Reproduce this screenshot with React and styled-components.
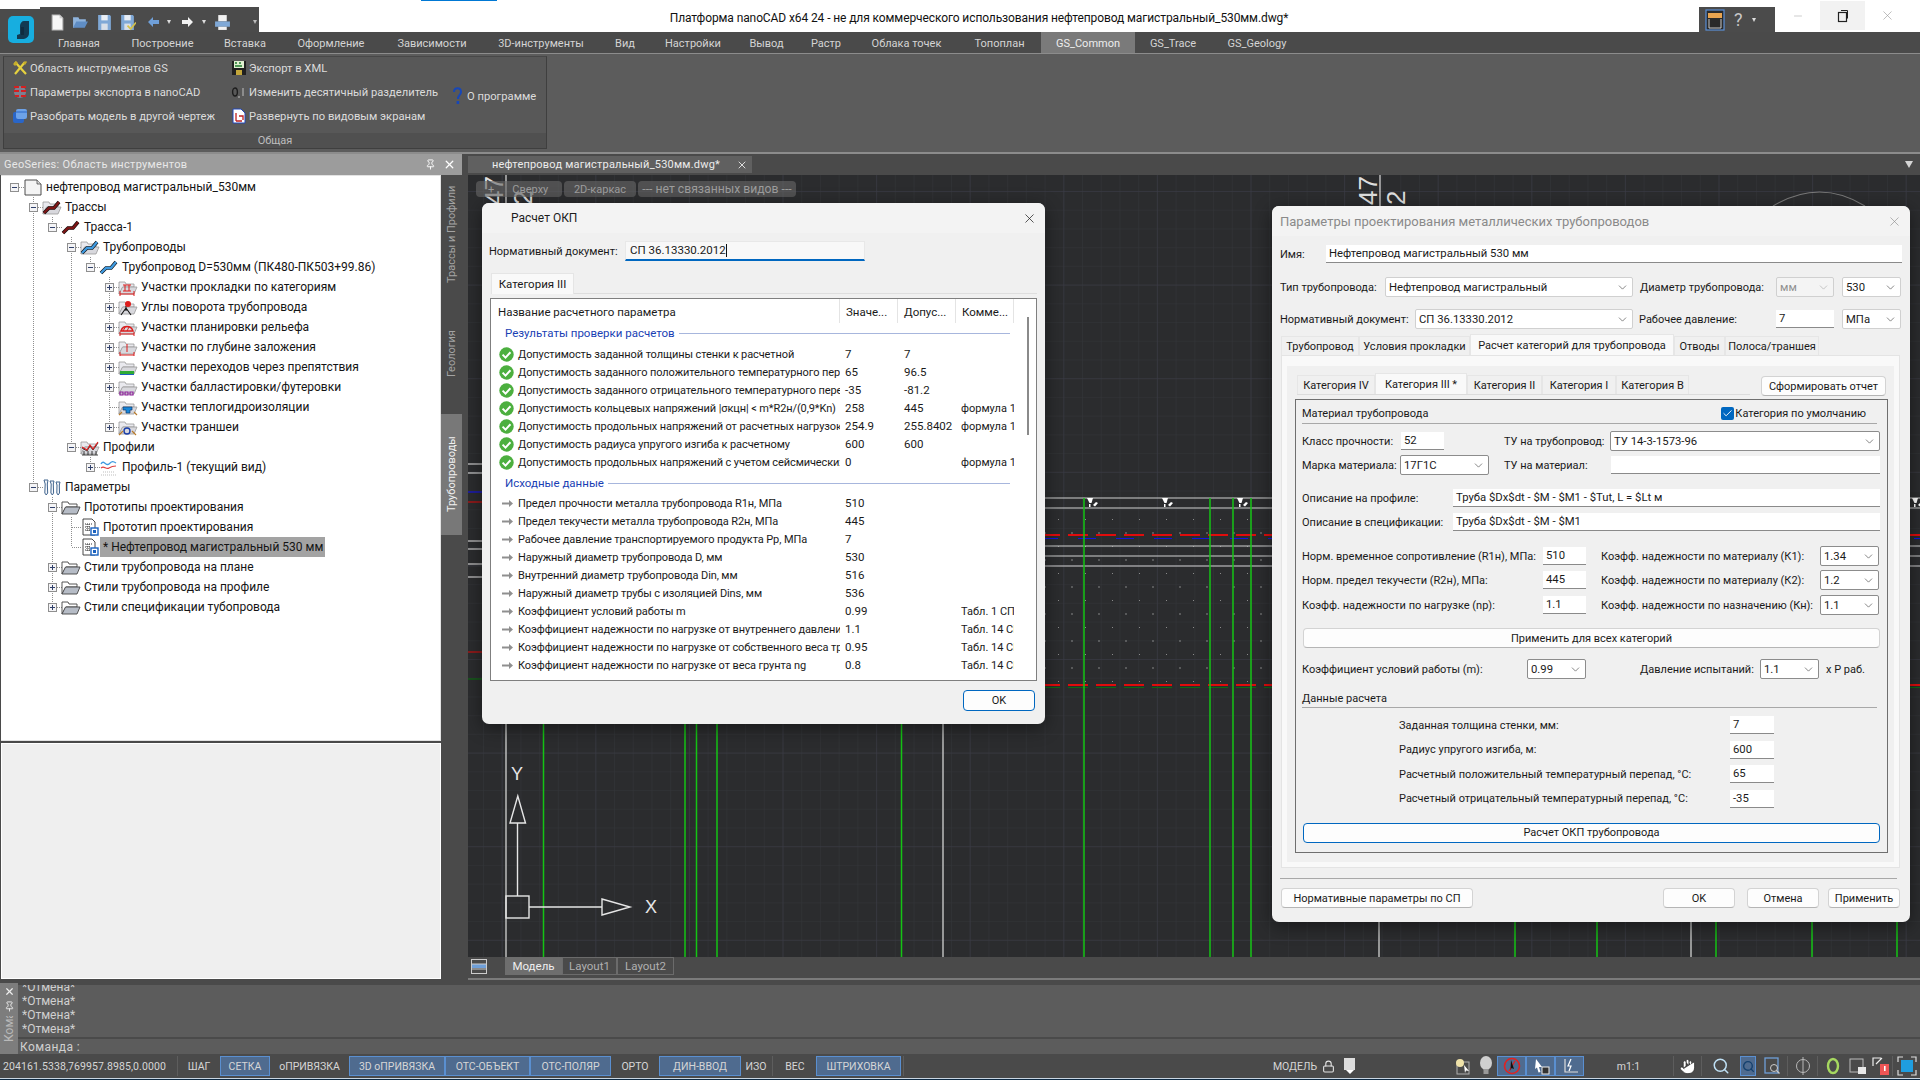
import React from "react";
import styled, { createGlobalStyle } from "styled-components";
import { ChevronDown, Hand, Search, Lock, Pin, X, Minus, Check } from "lucide-react";

const GlobalStyle = createGlobalStyle`
	html, body {
		margin: 0;
		padding: 0;
		width: 1920px;
		height: 1080px;
		overflow: hidden;
		background: #4a4a4a;
		font-family: "Roboto", "Liberation Sans", sans-serif;
		font-size: 11px;
	}
	* {
		box-sizing: border-box;
	}
`;

const Root = styled.div`
	width: 1920px;
	height: 1080px;
	display: flex;
	flex-direction: column;
	background: #4a4a4a;
	position: relative;
	overflow: hidden;
`;

/* title bar */
const TitleBar = styled.div`
	height: 32px;
	flex: none;
	display: flex;
	align-items: flex-end;
	background: #fff;
	position: relative;
`;
const TopSliver = styled.div`
	position: absolute;
	left: 421px;
	top: 0;
	width: 76px;
	height: 1px;
	background: #0078d4;
`;
const LogoBlock = styled.div`
	width: 40px;
	height: 23px;
	background: #4b4b4b;
	position: relative;
`;
const LogoMark = styled.svg`
	position: absolute;
	left: 8px;
	top: 7px;
	z-index: 2;
`;
const Qat = styled.div`
	width: 219px;
	height: 25px;
	background: #4b4b4b;
	display: grid;
	grid-template-columns: 21px 24px 23px 28px 20px 14px 21px 12px 39px auto;
	align-items: center;
	padding: 5px 0 0 11px;
`;
const QatCaret = styled.span`
	width: 0;
	height: 0;
	border-left: 2.5px solid transparent;
	border-right: 2.5px solid transparent;
	border-top: 4px solid ${(p) => p.$c || "#ddd"};
`;
const TitleText = styled.div`
	flex: 1;
	align-self: center;
	padding-top: 3px;
	text-align: center;
	font-size: 12px;
	letter-spacing: -0.1px;
	color: #111;
	white-space: nowrap;
`;
const HelpBlock = styled.div`
	width: 76px;
	height: 25px;
	background: #4b4b4b;
	display: flex;
	align-items: center;
	padding-left: 6px;
	gap: 9px;
	color: #c8c8c8;
	font-size: 18px;
`;
const WinControls = styled.div`
	width: 145px;
	height: 32px;
	padding: 1px 9px 2px 0;
	display: flex;
	align-self: flex-start;
`;
const WinButton = styled.div`
	width: 45px;
	height: 29px;
	display: flex;
	align-items: center;
	justify-content: center;
	color: ${(p) => (p.$active ? "#222" : "#999")};
	background: ${(p) => (p.$active ? "#f2f2f2" : "transparent")};
`;

/* ribbon */
const RibbonTabs = styled.div`
	height: 21px;
	flex: none;
	display: flex;
	padding-left: 43px;
	background: #4a4a4a;
`;
const RibbonTab = styled.div`
	width: ${(p) => p.$w}px;
	display: flex;
	align-items: center;
	justify-content: center;
	padding-top: 1px;
	font-size: 11px;
	white-space: nowrap;
	color: ${(p) => (p.$active ? "#eee" : "#d4d4d4")};
	background: ${(p) => (p.$active ? "#7a7a7a" : "transparent")};
`;
const Ribbon = styled.div`
	height: 101px;
	flex: none;
	padding: 2px 3px 3px;
	background: #5c5c5c;
	border-top: 1px solid #8c8c8c;
	border-bottom: 2px solid #8c8c8c;
`;
const RibbonPanel = styled.div`
	width: 544px;
	height: 93px;
	display: flex;
	flex-direction: column;
	border: 1px solid #3f3f3f;
	border-top-color: #484848;
	background: #585858;
`;
const RibbonBody = styled.div`
	flex: 1;
	display: grid;
	grid-template-columns: 219px 221px 1fr;
	padding-left: 8px;
	margin-top: -2px;
`;
const RibbonCol = styled.div`
	display: flex;
	flex-direction: column;
	justify-content: ${(p) => (p.$center ? "center" : "flex-start")};
	padding-top: ${(p) => (p.$center ? "4px" : "1px")};
`;
const RibbonItem = styled.div`
	height: 24px;
	display: flex;
	align-items: center;
	gap: ${(p) => p.$gap ?? 2}px;
	color: #dcdcdc;
	font-size: 11.2px;
	white-space: nowrap;
`;
const RibbonFoot = styled.div`
	height: 15px;
	flex: none;
	display: flex;
	align-items: center;
	justify-content: center;
	background: #505050;
	color: #bdbdbd;
	font-size: 11px;
`;

/* main */
const Main = styled.div`
	height: 829px;
	flex: none;
	display: flex;
`;
const ToolColumn = styled.div`
	width: 468px;
	flex: none;
	display: flex;
	flex-direction: column;
`;
const ToolHeader = styled.div`
	width: 462px;
	height: 21px;
	flex: none;
	display: flex;
	align-items: center;
	padding: 0 6px 1px 4px;
	gap: 7px;
	background: #9c9c9c;
	color: #e8e8e8;
	font-size: 11px;
`;
const ToolTitle = styled.div`
	flex: 1;
	letter-spacing: 0.3px;
`;
const ToolBody = styled.div`
	flex: 1;
	display: flex;
`;
const ToolStack = styled.div`
	width: 441px;
	height: 803px;
	flex: none;
	padding-left: 1px;
	display: flex;
	flex-direction: column;
	gap: 2px;
`;
const TreePane = styled.div`
	height: 566px;
	flex: none;
	padding-top: 1px;
	background: #fff;
	border: 1px solid #e3e3e3;
	border-left: none;
	overflow: hidden;
`;
const PreviewPane = styled.div`
	height: 236px;
	flex: none;
	background: #efefef;
	border: 1px solid #fff;
`;
const SideTabs = styled.div`
	width: 21px;
	flex: none;
	display: flex;
	flex-direction: column;
	background: #4a4a4a;
`;
const SideTab = styled.div`
	height: ${(p) => p.$h}px;
	display: flex;
	align-items: center;
	justify-content: center;
	writing-mode: vertical-rl;
	transform: rotate(180deg);
	font-size: 11px;
	white-space: nowrap;
	color: ${(p) => (p.$active ? "#f0f0f0" : "#a3a3a3")};
	background: ${(p) => (p.$active ? "#787878" : "transparent")};
`;

/* tree */
const TreeRow = styled.div`
	height: 20px;
	display: flex;
	align-items: stretch;
	padding-left: 4px;
`;
const dotV = "repeating-linear-gradient(to bottom,#8f8f8f 0 1px,transparent 1px 2px)";
const dotH = "repeating-linear-gradient(to right,#8f8f8f 0 1px,transparent 1px 2px)";
const Guide = styled.div`
	width: 19px;
	flex: none;
	background: ${(p) => (p.$line ? `${dotV} center / 1px 100% no-repeat` : "none")};
`;
const NodeCell = styled.div`
	width: 19px;
	flex: none;
	display: flex;
	align-items: center;
	justify-content: center;
	background:
		${dotH} right center / 50% 1px no-repeat,
		${(p) => (p.$up ? `${dotV} center top / 1px 50% no-repeat,` : "")}
		${(p) => (p.$down ? `${dotV} center bottom / 1px 50% no-repeat,` : "")}
		none;
`;
const Toggle = styled.span`
	width: 9px;
	height: 9px;
	display: flex;
	align-items: center;
	justify-content: center;
	border: 1px solid #8f8f8f;
	background: #f4f4f6;
	position: relative;
`;
const ToggleBar = styled.span`
	width: 5px;
	height: 1px;
	background: #30406a;
`;
const TogglePost = styled.span`
	position: absolute;
	left: 3px;
	top: 1px;
	width: 1px;
	height: 5px;
	background: #30406a;
`;
const NodeIcon = styled.div`
	width: 18px;
	flex: none;
	display: flex;
	align-items: center;
	justify-content: center;
`;
const NodeText = styled.div`
	display: flex;
	align-items: center;
	margin-left: 1px;
	padding: 0 2px 0 3px;
	font-size: 12px;
	color: #141414;
	white-space: nowrap;
	background: ${(p) => (p.$selected ? "#a3a3a3" : "transparent")};
`;

/* drawing area */
const DocColumn = styled.div`
	width: 1452px;
	flex: none;
	display: flex;
	flex-direction: column;
`;
const DocTabs = styled.div`
	height: 21px;
	flex: none;
	display: flex;
	align-items: center;
	padding: 2px 7px 2px 0;
	background: #4a4a4a;
`;
const DocTab = styled.div`
	width: 284px;
	height: 17px;
	display: flex;
	align-items: center;
	padding-left: 24px;
	gap: 16px;
	background: #606060;
	color: #ececec;
	font-size: 11px;
	letter-spacing: 0.2px;
	white-space: nowrap;
`;
const DocSpacer = styled.div`
	flex: 1;
`;
const DocCaret = styled.div`
	width: 0;
	height: 0;
	border-left: 4px solid transparent;
	border-right: 4px solid transparent;
	border-top: 7px solid #d5d5d5;
`;
const Viewport = styled.div`
	height: 782px;
	flex: none;
	position: relative;
	background: #2b2c2e;
	overflow: hidden;
`;
const CadSvg = styled.svg`
	display: block;
`;
const ViewPills = styled.div`
	position: absolute;
	left: 8px;
	top: 6px;
	display: flex;
	gap: 2px;
`;
const ViewPill = styled.div`
	width: ${(p) => p.$w}px;
	height: 16px;
	display: flex;
	align-items: center;
	justify-content: ${(p) => (p.$start ? "flex-start" : "center")};
	gap: 18px;
	padding-left: ${(p) => (p.$start ? 12 : 0)}px;
	border-radius: 4px;
	background: rgba(104, 104, 104, 0.62);
	color: #9d9d9d;
	font-size: ${(p) => p.$fs}px;
	white-space: nowrap;
`;
const LayoutBar = styled.div`
	height: 23px;
	flex: none;
	display: flex;
	padding-bottom: 3px;
	background: #4a4a4a;
	border-bottom: 2px solid #7b7b7b;
`;
const LayoutMenu = styled.div`
	width: 37px;
	display: flex;
	align-items: center;
	padding-left: 3px;
`;
const LayoutTab = styled.div`
	width: ${(p) => p.$w}px;
	display: flex;
	align-items: center;
	justify-content: center;
	font-size: 11.5px;
	color: ${(p) => (p.$active ? "#efefef" : "#b0b0b0")};
	background: ${(p) => (p.$active ? "#6e6e6e" : "transparent")};
	border: ${(p) => (p.$active ? "none" : "1px solid #6b6b6b")};
`;

/* dialogs */
const Dialog = styled.div`
	position: absolute;
	left: ${(p) => p.$x}px;
	top: ${(p) => p.$y}px;
	width: ${(p) => p.$w}px;
	height: ${(p) => p.$h}px;
	display: flex;
	flex-direction: column;
	background: #f0f0f0;
	border-radius: 7px;
	box-shadow: 0 4px 18px rgba(0, 0, 0, 0.45);
	color: #1a1a1a;
	font-size: 11px;
`;
const DialogHead = styled.div`
	height: 30px;
	flex: none;
	display: flex;
	align-items: center;
	justify-content: space-between;
	padding: 0 8px 0 ${(p) => p.$pad}px;
	background: #f3f3f3;
	border-radius: 7px 7px 0 0;
	color: ${(p) => (p.$muted ? "#8a8a8a" : "#1c1c1c")};
	font-size: ${(p) => (p.$muted ? 13 : 12)}px;
`;
const DocRow = styled.div`
	display: flex;
	align-items: center;
	padding: 8px 0 0 7px;
`;
const DocLabel = styled.div`
	width: 136px;
	white-space: nowrap;
`;
const DocInput = styled.div`
	width: 240px;
	height: 20px;
	display: flex;
	align-items: center;
	padding: 0 4px 1px;
	background: #f8f8f8;
	border: 1px solid #e8e8e8;
	border-bottom: 2px solid #0067c0;
	font-size: 11.5px;
`;
const Caret = styled.span`
	width: 1px;
	height: 13px;
	background: #111;
`;
const SingleTabBar = styled.div`
	height: 21px;
	margin: 12px 8px 0 9px;
	display: flex;
	border-bottom: 1px solid #dedede;
`;
const SingleTab = styled.div`
	width: 83px;
	height: 21px;
	display: flex;
	align-items: center;
	justify-content: center;
	background: #f9f9f9;
	border: 1px solid #e5e5e5;
	border-bottom: none;
	font-size: 11.5px;
`;
const ResultBox = styled.div`
	height: 383px;
	margin: 4px 8px 0;
	display: flex;
	background: #fff;
	border: 1px solid #7f7f7f;
`;
const ResultList = styled.div`
	width: 529px;
	flex: none;
	overflow: hidden;
`;
const ResultGrid = styled.div`
	display: grid;
	grid-template-columns: 349px 58px 58px 58px;
	height: ${(p) => p.$h}px;
	align-items: center;
`;
const ResultHead = styled.div`
	height: 24px;
	display: flex;
	align-items: center;
	padding: 2px 0 0 ${(p) => p.$pad}px;
	border-right: 1px solid #e4e4e4;
	font-size: 11.5px;
	white-space: nowrap;
	overflow: hidden;
`;
const GroupHead = styled.div`
	width: 519px;
	height: ${(p) => p.$h}px;
	display: flex;
	align-items: flex-start;
	gap: 4px;
	padding-left: 14px;
	margin-top: ${(p) => p.$mt}px;
	color: #1a3fb4;
	font-size: 11.5px;
	line-height: 20px;
	white-space: nowrap;
`;
const GroupLine = styled.span`
	flex: 1;
	height: 1px;
	margin-top: 10px;
	background: #a7b6dd;
`;
const ResultName = styled.div`
	display: flex;
	align-items: center;
	gap: 4px;
	padding-left: 8px;
	letter-spacing: -0.1px;
	overflow: hidden;
	white-space: nowrap;
`;
const ResultCell = styled.div`
	padding-left: ${(p) => p.$pad}px;
	font-size: ${(p) => p.$fs || 11.5}px;
	overflow: hidden;
	white-space: nowrap;
`;
const ScrollTrack = styled.div`
	flex: 1;
	padding: 18px 0 0 7px;
`;
const ScrollThumb = styled.div`
	width: 2px;
	height: 118px;
	background: #8a8a8a;
`;
const OkRow = styled.div`
	display: flex;
	justify-content: flex-end;
	padding: 9px 10px 0 0;
`;

/* parameter dialog */
const ParamBody = styled.div`
	flex: 1;
	display: flex;
	flex-direction: column;
	padding: 9px 8px 0;
`;
const FormRow = styled.div`
	display: flex;
	align-items: center;
	height: ${(p) => p.$h || 20}px;
	flex: none;
	margin-top: ${(p) => p.$mt || 0}px;
	padding-left: ${(p) => p.$pad || 0}px;
`;
const Label = styled.div`
	width: ${(p) => p.$w}px;
	flex: none;
	margin-left: ${(p) => p.$ml || 0}px;
	white-space: nowrap;
`;
const TextField = styled.div`
	width: ${(p) => (p.$w ? `${p.$w}px` : "auto")};
	flex: ${(p) => (p.$w ? "none" : 1)};
	height: 18px;
	display: flex;
	align-items: center;
	padding: 0 3px;
	background: #fff;
	border-bottom: 1px solid #8a8a8a;
	font-size: 11.3px;
	white-space: nowrap;
`;
const SelectField = styled.div`
	width: ${(p) => (p.$w ? `${p.$w}px` : "auto")};
	flex: ${(p) => (p.$w ? "none" : 1)};
	height: 20px;
	margin-left: ${(p) => p.$ml || 0}px;
	display: flex;
	align-items: center;
	justify-content: space-between;
	padding: 0 3px;
	background: ${(p) => (p.$disabled ? "#f4f4f4" : "#fff")};
	color: ${(p) => (p.$disabled ? "#8f8f8f" : "#1a1a1a")};
	border: 1px solid ${(p) => (p.$dark ? "#8c8c8c" : "#d0d0d0")};
	border-radius: 2px;
	font-size: 11.3px;
	white-space: nowrap;
`;
const ParamTabs = styled.div`
	height: 21px;
	flex: none;
	margin: 5px 0 0 1px;
	display: flex;
	align-items: flex-end;
`;
const ParamTab = styled.div`
	width: ${(p) => p.$w}px;
	height: ${(p) => (p.$active ? 21 : 19)}px;
	display: flex;
	align-items: center;
	justify-content: center;
	background: ${(p) => (p.$active ? "#f9f9f9" : "#f0f0f0")};
	border: 1px solid #e6e6e6;
	border-bottom: none;
	white-space: nowrap;
`;
const TabBody = styled.div`
	width: 619px;
	height: 513px;
	flex: none;
	margin-left: 1px;
	padding: 10px 5px 5px;
	background: #f9f9f9;
	border: 1px solid #e4e4e4;
`;
const TabInner = styled.div`
	height: 496px;
	padding-top: 8px;
	background: #f0f0f0;
`;
const CategoryBar = styled.div`
	height: 21px;
	display: flex;
	align-items: flex-start;
	padding-left: 10px;
`;
const CategoryTabs = styled.div`
	width: 453px;
	height: 21px;
	display: flex;
	align-items: flex-end;
	border-bottom: 1px solid #dcdcdc;
`;
const ActionButton = styled.div`
	width: ${(p) => (p.$w ? `${p.$w}px` : "auto")};
	height: ${(p) => p.$h || 20}px;
	flex: none;
	margin: ${(p) => p.$m || "0"};
	display: flex;
	align-items: center;
	justify-content: center;
	background: #fdfdfd;
	border: 1px solid ${(p) => (p.$primary ? "#0067c0" : "#d3d3d3")};
	border-bottom-color: ${(p) => (p.$primary ? "#0067c0" : "#b5b5b5")};
	border-radius: 4px;
	white-space: nowrap;
`;
const GroupBox = styled.div`
	width: 593px;
	height: 454px;
	margin: 4px 0 0 8px;
	padding: 0 7px 0 6px;
	border: 1px solid #6f6f6f;
`;
const SectionHead = styled.div`
	width: 575px;
	height: ${(p) => p.$h}px;
	display: flex;
	align-items: center;
	justify-content: space-between;
	margin-top: ${(p) => p.$mt || 0}px;
	padding-top: ${(p) => p.$pt || 0}px;
	border-bottom: 1px solid #a8a8a8;
	white-space: nowrap;
`;
const CheckRow = styled.div`
	display: flex;
	align-items: center;
	gap: 1px;
	margin-right: 11px;
`;
const CheckBox = styled.span`
	width: 13px;
	height: 13px;
	display: flex;
	align-items: center;
	justify-content: center;
	background: #0067c0;
	border-radius: 2px;
	color: #fff;
`;
const CalcRows = styled.div`
	display: flex;
	flex-direction: column;
	gap: 6.5px;
	margin-top: 8px;
`;
const Rule = styled.div`
	height: 1px;
	flex: none;
	width: 617px;
	margin-top: 10px;
	background: #a8a8a8;
`;
const FootRow = styled.div`
	display: flex;
	height: 20px;
	margin: 9px 2px 0 1px;
	gap: 9px;
`;
const FootGap = styled.div`
	flex: 1;
`;

/* command line */
const CommandArea = styled.div`
	height: 71px;
	flex: none;
	display: flex;
`;
const CommandStrip = styled.div`
	width: 18px;
	flex: none;
	display: flex;
	flex-direction: column;
	align-items: center;
	gap: 4px;
	padding-top: 3px;
	background: #7d7d7d;
	color: #eee;
	overflow: hidden;
`;
const StripText = styled.div`
	writing-mode: vertical-rl;
	transform: rotate(180deg);
	color: #b9b9b9;
	font-size: 12px;
	height: 26px;
	overflow: hidden;
`;
const CommandMain = styled.div`
	flex: 1;
	display: flex;
	flex-direction: column;
	padding-top: 2px;
`;
const CommandLog = styled.div`
	height: 52px;
	flex: none;
	display: flex;
	flex-direction: column;
	justify-content: flex-end;
	padding: 0 0 1px 4px;
	background: #5c5c5c;
	color: #d0d0d0;
	font-size: 12px;
	line-height: 14px;
	overflow: hidden;
`;
const CommandInput = styled.div`
	flex: 1;
	display: flex;
	align-items: center;
	margin-top: 2px;
	padding-left: 2px;
	background: #5c5c5c;
	color: #d0d0d0;
	font-size: 12px;
	letter-spacing: 0.4px;
`;

/* status bar */
const StatusBar = styled.div`
	height: 24px;
	flex: none;
	display: flex;
	align-items: center;
	background: #4a4a4a;
	color: #d6d6d6;
	font-size: 10.5px;
`;
const StatusText = styled.div`
	width: ${(p) => p.$w}px;
	flex: none;
	text-align: ${(p) => p.$align || "center"};
	padding-left: ${(p) => p.$pad || 0}px;
	letter-spacing: ${(p) => p.$ls || 0}px;
	white-space: nowrap;
`;
const StatusToggle = styled.div`
	width: ${(p) => p.$w}px;
	height: 20px;
	flex: none;
	display: flex;
	align-items: center;
	justify-content: center;
	background: #4f6b8f;
	border: 1px solid #5a8fd0;
	white-space: nowrap;
`;
const StatusRule = styled.span`
	width: 1px;
	height: 20px;
	flex: none;
	margin: 0 ${(p) => p.$m ?? 1}px;
	background: #5d5d5d;
`;
const StatusIcon = styled.div`
	width: ${(p) => p.$w}px;
	height: 20px;
	flex: none;
	display: flex;
	align-items: center;
	justify-content: center;
	background: ${(p) => (p.$on ? "#4f6b8f" : "transparent")};
	border: ${(p) => (p.$on ? "1px solid #5a8fd0" : "none")};
	color: #e4e4e4;
`;
const BottomStrip = styled.div`
	flex: 1;
	background: #0d2a44;
	border-top: 1px solid #c9d6e2;
`;

/* ---- small drawings ---- */
const IconSvg = styled.svg`
	flex: none;
	display: block;
`;
const Icon = ({ w = 16, h = 16, vb, children }) => (
	<IconSvg width={w} height={h} viewBox={vb || `0 0 ${w} ${h}`}>
		{children}
	</IconSvg>
);

const Logo = () => (
	<LogoMark width="26" height="27" viewBox="0 0 26 27">
		<rect x="0" y="0" width="26" height="27" rx="5" fill="#17aee0" />
		<path d="M16 5h5v12c0 4-3 6-7 6H9v-4l3-1V10c0-3 2-5 4-5z" fill="#123a52" />
		<path d="M13 11h3v8h-3z" fill="#0f2c40" />
	</LogoMark>
);

const DocSheet = () => (
	<Icon w={13} h={17} vb="0 0 12 16">
		<path d="M1 1h7l3 3v11H1z" fill="#f7f7f7" stroke="#bbb" />
		<path d="M8 1v3h3" fill="#ccc" />
	</Icon>
);
const FolderOpen = () => (
	<Icon w={17} h={17} vb="0 0 16 16">
		<path d="M1 3h5l1 2h6v3H5l-3 5H1z" fill="#8fb3dc" />
		<path d="M4 7h11l-3 6H1z" fill="#5f8dc4" />
	</Icon>
);
const Save = ({ check }) => (
	<Icon w={17} h={17} vb="0 0 16 16">
		<path d="M2 1h11l1 1v13H2z" fill="#7fa8d6" />
		<rect x="5" y="1" width="6" height="5" fill="#e9eef5" />
		<rect x="5" y="9" width="6" height="6" fill="#d8dfe8" />
		{check && <path d="M8 11l3 3 5-6" fill="none" stroke="#d6c24a" strokeWidth="1.6" />}
	</Icon>
);
const Printer = () => (
	<Icon w={17} h={19} vb="0 0 16 16">
		<rect x="4" y="1" width="8" height="6" fill="#f1f1f1" />
		<rect x="1" y="7" width="14" height="5" fill="#7fa8d6" />
		<rect x="4" y="12" width="8" height="3" fill="#f1f1f1" />
	</Icon>
);
const ArrowSmall = ({ c, back }) => (
	<Icon w={13} h={12}>
		<path d={back ? "M1 6l5-5v3h6v4H6v3z" : "M12 6L7 1v3H1v4h6v3z"} fill={c} />
	</Icon>
);

const Tools = () => (
	<Icon>
		<path d="M3 2l11 12M13 2L3 14" stroke="#e5d13f" strokeWidth="2.2" />
		<path d="M1 4l3-3 2 2-3 3zM11 3l3-2 1 1-2 3z" fill="#c7ae2a" />
	</Icon>
);
const XmlDisk = () => (
	<Icon>
		<rect x="1" y="1" width="14" height="14" fill="#202020" />
		<rect x="3" y="1" width="10" height="7" fill="#dff0d0" />
		<path d="M4 3h2M8 3h2M4 6h7" stroke="#1f7a2d" strokeWidth="1.4" />
		<rect x="5" y="10" width="6" height="5" fill="#c3a63a" />
	</Icon>
);
const ExportParams = () => (
	<Icon>
		<circle cx="8" cy="8" r="6" fill="#7d7f90" />
		<path d="M2 3h5M9 3h5M2 7h5M9 7h5M3 12h4M9 12h5" stroke="#d42020" strokeWidth="2" />
	</Icon>
);
const Decimal = () => (
	<Icon>
		<ellipse cx="4" cy="8" rx="2.4" ry="4" fill="none" stroke="#1d1d1d" strokeWidth="1.4" />
		<path d="M8 12v2M12 4v8" stroke="#9a9a9a" strokeWidth="1.6" />
	</Icon>
);
const Question = () => (
	<Icon w={10} h={18}>
		<path d="M2 5c0-5 7-5 7 0 0 3-3 3-3 7" fill="none" stroke="#1747b8" strokeWidth="2" />
		<rect x="4.6" y="14" width="2.6" height="3" fill="#1747b8" />
	</Icon>
);
const Split = () => (
	<Icon>
		<rect x="1" y="4" width="11" height="11" rx="2" fill="#2a66c8" />
		<rect x="4" y="1" width="11" height="10" rx="2" fill="#6da2e8" />
		<path d="M4 4h11" stroke="#2a66c8" />
	</Icon>
);
const Deploy = () => (
	<Icon>
		<path d="M2 1h8l4 4v10H2z" fill="#fff" stroke="#2146b8" />
		<path d="M5 5v8M5 13h6M8 8h4v4" fill="none" stroke="#c02020" strokeWidth="1.3" />
	</Icon>
);

const folderBase = (
	<>
		<path d="M1 4h6l1 2h8v3H5l-4 7z" fill="#e9e9ee" stroke="#9a9a9a" strokeWidth=".8" />
		<path d="M1 16l3.5-7H19l-3 7z" fill="#d8d8dd" stroke="#9a9a9a" strokeWidth=".8" />
	</>
);
const Folder = ({ plain, children }) => (
	<Icon w={20} h={18}>
		{plain ? (
			<>
				<path d="M1 4h6l1 2h8v3H5l-4 7z" fill="#fff" stroke="#444" strokeWidth=".9" />
				<path d="M1 16l3.5-7H19l-3 7z" fill="#b6bcc6" stroke="#444" strokeWidth=".9" />
			</>
		) : (
			folderBase
		)}
		{children}
	</Icon>
);
const routeLine = (c) => (
	<>
		<path d="M2 15l5-5h5l5-6" fill="none" stroke="#111" strokeWidth="3.6" />
		<path d="M2 15l5-5h5l5-6" fill="none" stroke={c} strokeWidth="2.4" />
	</>
);
const NODE_ICONS = {
	sheet: (
		<Icon w={18} h={18}>
			<path d="M1 2h12l4 4v11H1z" fill="#f4f4f4" stroke="#3a3a3a" strokeWidth=".9" />
			<path d="M13 2v4h4" fill="#d8d8d8" stroke="#3a3a3a" strokeWidth=".7" />
		</Icon>
	),
	routeFolder: <Folder>{routeLine("#7c1616")}</Folder>,
	route: <Icon w={20} h={18}>{routeLine("#7c1616")}</Icon>,
	pipeFolder: <Folder>{routeLine("#3f9ae0")}</Folder>,
	pipe: <Icon w={20} h={18}>{routeLine("#3f9ae0")}</Icon>,
	cat: (
		<Folder>
			<path d="M2 16h14M2 13v5M16 13v5M7 7v6M11 7v6M5 7h8M5 13h8" stroke="#dd1c1c" strokeWidth="1" fill="none" />
		</Folder>
	),
	angle: (
		<Folder>
			<path d="M8 10l-5 7M8 10l5 7M8 8v5" stroke="#111" strokeWidth="1.1" />
			<circle cx="10" cy="6" r="3" fill="#dd1c1c" />
		</Folder>
	),
	relief: (
		<Folder>
			<path d="M3 13c2-6 10-6 12 0z" fill="none" stroke="#dd1c1c" strokeWidth="1.4" />
			<path d="M2 16h14M2 14v4M16 14v4M5 13l3-5M9 13l2-4" stroke="#dd1c1c" strokeWidth="1" />
		</Folder>
	),
	depth: (
		<Folder>
			<path d="M9 6v8M2 17h14M2 14v5M16 14v5" stroke="#dd1c1c" strokeWidth="1" />
		</Folder>
	),
	cross: (
		<Folder>
			<rect x="2" y="13" width="14" height="3" fill="#2eaa34" />
			<rect x="2" y="16" width="14" height="1" fill="#1f5fc0" />
		</Folder>
	),
	ballast: (
		<Folder>
			<path d="M2 14h3v3H2zM7 14h3v3H7zM12 14h3v3h-3z" fill="none" stroke="#8c1f9a" strokeWidth="1.2" />
		</Folder>
	),
	thermal: (
		<Folder>
			<path d="M5 9h9v3h-2v3H8v-3H5z" fill="#1786d8" stroke="#103a70" strokeWidth=".7" />
			<path d="M1 17l3-3M19 17l-3-3" stroke="#b87a2a" strokeWidth="1.2" />
		</Folder>
	),
	trench: (
		<Folder>
			<circle cx="9" cy="13" r="3" fill="none" stroke="#1a3ea8" strokeWidth="1.4" />
			<path d="M1 17l4-4M18 17l-4-4" stroke="#b87a2a" strokeWidth="1.2" />
		</Folder>
	),
	profiles: (
		<Folder>
			<path d="M2 17h16M4 13v4M8 13v4M12 13v4M16 13v4M2 10l5 3 3-5 3 4 5-7" fill="none" stroke="#111" strokeWidth=".8" />
			<path d="M2 9l5 3 3-5 3 4 5-7" fill="none" stroke="#dd1c1c" strokeWidth="1.2" />
		</Folder>
	),
	profile: (
		<Icon w={20} h={18}>
			<path d="M2 17h15M4 14h12" stroke="#bdbdbd" strokeWidth="1" strokeDasharray="1 1" />
			<path d="M2 6c3-5 5 3 8 0s4-3 7-1" fill="none" stroke="#3f9ae0" strokeWidth="1.4" />
			<path d="M2 10c3-3 5 2 8 0s4-2 7-2" fill="none" stroke="#dd4040" strokeWidth="1.1" />
		</Icon>
	),
	params: (
		<Icon w={20} h={18}>
			<path d="M2 2h4l-.7 4 .4 9-1.5 2-1.4-2 .4-9zM8 3h4l-.7 3 .3 9-1.3 2-1.4-2 .3-9zM14 4h4l-.7 3 .2 8-1.4 2-1.3-2 .2-8z" fill="#f4f6fa" stroke="#42668f" strokeWidth="1" />
		</Icon>
	),
	plainFolder: <Folder plain />,
	sheetGrid: (
		<Icon w={18} h={18}>
			<path d="M2 1h9l3 3v13H2z" fill="#fff" stroke="#333" strokeWidth=".9" />
			<path d="M4 6h8M4 9h5M4 12h5M6 6v8M8 6v8" stroke="#333" strokeWidth="1" strokeDasharray="1 1" />
			<rect x="10" y="10" width="7" height="7" fill="#fff" stroke="#1b63c0" strokeWidth="1.4" />
			<rect x="12" y="12" width="3" height="3" fill="#1b63c0" />
		</Icon>
	),
};

const TREE = [
	{ col: 0, t: "-", icon: "sheet", text: "нефтепровод магистральный_530мм" },
	{ col: 1, t: "-", up: true, down: true, icon: "routeFolder", text: "Трассы" },
	{ col: 2, t: "-", up: true, lines: [1], icon: "route", text: "Трасса-1" },
	{ col: 3, t: "-", up: true, down: true, lines: [1], icon: "pipeFolder", text: "Трубопроводы" },
	{ col: 4, t: "-", up: true, lines: [1, 3], icon: "pipe", text: "Трубопровод D=530мм (ПК480-ПК503+99.86)" },
	{ col: 5, t: "+", up: true, down: true, lines: [1, 3], icon: "cat", text: "Участки прокладки по категориям" },
	{ col: 5, t: "+", up: true, down: true, lines: [1, 3], icon: "angle", text: "Углы поворота трубопровода" },
	{ col: 5, t: "+", up: true, down: true, lines: [1, 3], icon: "relief", text: "Участки планировки рельефа" },
	{ col: 5, t: "+", up: true, down: true, lines: [1, 3], icon: "depth", text: "Участки по глубине заложения" },
	{ col: 5, t: "+", up: true, down: true, lines: [1, 3], icon: "cross", text: "Участки переходов через препятствия" },
	{ col: 5, t: "+", up: true, down: true, lines: [1, 3], icon: "ballast", text: "Участки балластировки/футеровки" },
	{ col: 5, up: true, down: true, lines: [1, 3], icon: "thermal", text: "Участки теплогидроизоляции" },
	{ col: 5, t: "+", up: true, lines: [1, 3], icon: "trench", text: "Участки траншеи" },
	{ col: 3, t: "-", up: true, lines: [1], icon: "profiles", text: "Профили" },
	{ col: 4, t: "+", up: true, lines: [1], icon: "profile", text: "Профиль-1 (текущий вид)" },
	{ col: 1, t: "-", up: true, icon: "params", text: "Параметры" },
	{ col: 2, t: "-", up: true, down: true, icon: "plainFolder", text: "Прототипы проектирования" },
	{ col: 3, up: true, down: true, lines: [2], icon: "sheetGrid", text: "Прототип проектирования" },
	{ col: 3, up: true, lines: [2], icon: "sheetGrid", text: "* Нефтепровод магистральный 530 мм", selected: true },
	{ col: 2, t: "+", up: true, down: true, icon: "plainFolder", text: "Стили трубопровода на плане" },
	{ col: 2, t: "+", up: true, down: true, icon: "plainFolder", text: "Стили трубопровода на профиле" },
	{ col: 2, t: "+", up: true, icon: "plainFolder", text: "Стили спецификации тубопровода" },
];

const CHECKS = [
	["Допустимость заданной толщины стенки к расчетной", "7", "7", ""],
	["Допустимость заданного положительного температурного перепада", "65", "96.5", ""],
	["Допустимость заданного отрицательного температурного перепада", "-35", "-81.2", ""],
	["Допустимость кольцевых напряжений |σкцн| < m*R2н/(0,9*Kn)", "258", "445", "формула 1"],
	["Допустимость продольных напряжений от расчетных нагрузок", "254.9", "255.8402", "формула 1"],
	["Допустимость радиуса упругого изгиба к расчетному", "600", "600", ""],
	["Допустимость продольных напряжений с учетом сейсмических", "0", "", "формула 1"],
];
const SOURCE = [
	["Предел прочности металла трубопровода R1н, МПа", "510", ""],
	["Предел текучести металла трубопровода  R2н, МПа", "445", ""],
	["Рабочее давление транспортируемого продукта Pр, МПа", "7", ""],
	["Наружный диаметр трубопровода D, мм", "530", ""],
	["Внутренний диаметр трубопровода Din, мм", "516", ""],
	["Наружный диаметр трубы с изоляцией Dins, мм", "536", ""],
	["Коэффициент условий работы m", "0.99", "Табл. 1 СП"],
	["Коэффициент надежности по нагрузке от внутреннего давления", "1.1", "Табл. 14 СП"],
	["Коэффициент надежности по нагрузке от собственного веса трубы", "0.95", "Табл. 14 СП"],
	["Коэффициент надежности по нагрузке от веса грунта ng", "0.8", "Табл. 14 СП"],
];

const RIBBON_TABS = [
	["Главная", 72],
	["Построение", 95],
	["Вставка", 70],
	["Оформление", 102],
	["Зависимости", 100],
	["3D-инструменты", 118],
	["Вид", 50],
	["Настройки", 86],
	["Вывод", 61],
	["Растр", 58],
	["Облака точек", 103],
	["Топоплан", 83],
	["GS_Common", 94, true],
	["GS_Trace", 76],
	["GS_Geology", 92],
];

const GREEN_LINES = [543.5, 685, 696.5, 717, 901.5, 1084, 1210, 1233, 1251, 1515, 1597, 1716, 1812, 1897];
const PALE_LINES = [506, 943, 1379, 1691];
const PALE_ROWS = [498, 508, 546, 556, 566];
const LEFT_ROWS = [464, 473, 541, 549, 564, 577];

const CadDrawing = () => (
	<CadSvg width="1452" height="782" viewBox="468 175 1452 782">
		<defs>
			<pattern id="minor" x="1063.3" y="191" width="18.72" height="18.72" patternUnits="userSpaceOnUse">
				<path d="M0 0V18.72M0 0H18.72" stroke="#34363a" strokeWidth="1" fill="none" />
			</pattern>
			<pattern id="major" x="1063.3" y="191" width="93.6" height="93.6" patternUnits="userSpaceOnUse">
				<path d="M0 0V93.6M0 0H93.6" stroke="#3b3c48" strokeWidth="1" fill="none" />
			</pattern>
			<pattern id="dots" x="1058" y="519" width="27" height="27" patternUnits="userSpaceOnUse">
				<rect x="0" y="0" width="1" height="1" fill="#8a8a8a" />
				<rect x="13.5" y="13.5" width="1" height="1" fill="#e0e0e0" />
			</pattern>
		</defs>
		<rect x="468" y="175" width="1452" height="782" fill="url(#minor)" />
		<rect x="468" y="175" width="1452" height="782" fill="url(#major)" />
		<rect x="1040" y="515" width="880" height="170" fill="url(#dots)" />
		<g fill="none" strokeWidth="1.2">
			{LEFT_ROWS.map((y) => (
				<path key={y} d={`M468 ${y}H484`} stroke="#d0d0d0" />
			))}
			<path d="M468 492H484" stroke="#1414e0" />
			<path d="M468 502H484" stroke="#c81010" />
			<path d="M468 652H484" stroke="#c81010" />
			<path d="M468 679H484" stroke="#0d6a12" />
			{PALE_ROWS.map((y) => (
				<path key={y} d={`M1040 ${y}H1920`} stroke="#d0d0d0" />
			))}
			<path d="M1040 535H1920" stroke="#e00c0c" strokeWidth="2" strokeDasharray="20 8" />
			<path d="M1040 538.5H1920" stroke="#1414e0" strokeWidth="1" strokeDasharray="18 20" />
			<path d="M1040 685H1920" stroke="#e00c0c" strokeWidth="2" strokeDasharray="20 8" />
			<path d="M1040 687.5H1920" stroke="#0d6a12" strokeWidth="1" strokeDasharray="20 8" />
			{PALE_LINES.map((x) => (
				<path key={x} d={`M${x} 498V957`} stroke="#bcbcbc" strokeWidth="1.5" />
			))}
			{GREEN_LINES.map((x) => (
				<path key={x} d={`M${x} 498V957`} stroke="#14c414" strokeWidth="1.5" />
			))}
			<path d="M506 175V205" stroke="#e0e0e0" />
			<path d="M1380 171V206" stroke="#e0e0e0" />
			<path d="M1773 206Q1820 178 1865 206" stroke="#7a7a7a" />
		</g>
		{[1090, 1165, 1240, 1915].map((x) => (
			<g key={x} fill="#fff">
				<path d={`M${x - 3} 498h6l-1.5 5h-2z`} />
				<path d={`M${x + 3} 505l3-3 2 1-3 3.5z`} />
				<rect x={x - 1} y="504" width="1.5" height="3" />
			</g>
		))}
		<g fill="#dedede" fontFamily="Liberation Sans, sans-serif" fontSize="26">
			<text transform="translate(503 205) rotate(-90)">47</text>
			<text transform="translate(532 205) rotate(-90)">2</text>
			<text transform="translate(1377 205) rotate(-90)">47</text>
			<text transform="translate(1405 205) rotate(-90)">2</text>
		</g>
		<g fill="none" stroke="#e6e6e6" strokeWidth="1.4">
			<rect x="506" y="896" width="23" height="22" />
			<path d="M517.5 896V823" />
			<path d="M510 823h15.5l-7.7-27z" />
			<path d="M529 907H602" />
			<path d="M602 899v16l28-8z" />
		</g>
		<g fill="#e6e6e6" fontFamily="Liberation Sans, sans-serif" fontSize="18">
			<text x="511" y="780">Y</text>
			<text x="645" y="913">X</text>
		</g>
	</CadSvg>
);

const CheckMark = () => (
	<Icon w={15} h={15}>
		<circle cx="7.5" cy="7.5" r="7.2" fill="#4caf3f" />
		<path d="M3.6 7.6l2.9 3 5-5.4" fill="none" stroke="#fff" strokeWidth="2" />
	</Icon>
);
const GreyArrow = () => (
	<Icon w={15} h={15}>
		<path d="M3 6.5h7V4l4 3.5-4 3.5V8.5H3z" fill="#8f8f8f" />
	</Icon>
);
const Chevron = ({ muted }) => (
	<ChevronDown size={13} strokeWidth={1.3} color={muted ? "#b0b0b0" : "#555"} />
);

const Select = ({ children, w, ml, dark, disabled }) => (
	<SelectField $w={w} $ml={ml} $dark={dark} $disabled={disabled}>
		<span>{children}</span>
		<Chevron muted={disabled} />
	</SelectField>
);

const CalcDialog = () => (
	<Dialog $x={14} $y={28} $w={563} $h={521}>
		<DialogHead $pad={29}>
			<span>Расчет ОКП</span>
			<X size={15} strokeWidth={1.2} color="#222" />
		</DialogHead>
		<DocRow>
			<DocLabel>Нормативный документ:</DocLabel>
			<DocInput>
				СП 36.13330.2012
				<Caret />
			</DocInput>
		</DocRow>
		<SingleTabBar>
			<SingleTab>Категория III</SingleTab>
		</SingleTabBar>
		<ResultBox>
			<ResultList>
				<ResultGrid $h={24}>
					<ResultHead $pad={7}>Название расчетного параметра</ResultHead>
					<ResultHead $pad={6}>Значе...</ResultHead>
					<ResultHead $pad={6}>Допус...</ResultHead>
					<ResultHead $pad={6}>Комме...</ResultHead>
				</ResultGrid>
				<GroupHead $mt={0} $h={22}>
					Результаты проверки расчетов
					<GroupLine />
				</GroupHead>
				{CHECKS.map((r) => (
					<ResultGrid key={r[0]} $h={18}>
						<ResultName>
							<CheckMark />
							{r[0]}
						</ResultName>
						<ResultCell $pad={5}>{r[1]}</ResultCell>
						<ResultCell $pad={6}>{r[2]}</ResultCell>
						<ResultCell $pad={5} $fs={11}>{r[3]}</ResultCell>
					</ResultGrid>
				))}
				<GroupHead $mt={2} $h={21}>
					Исходные данные
					<GroupLine />
				</GroupHead>
				{SOURCE.map((r) => (
					<ResultGrid key={r[0]} $h={18}>
						<ResultName>
							<GreyArrow />
							{r[0]}
						</ResultName>
						<ResultCell $pad={5}>{r[1]}</ResultCell>
						<ResultCell $pad={6} />
						<ResultCell $pad={5} $fs={11}>{r[2]}</ResultCell>
					</ResultGrid>
				))}
			</ResultList>
			<ScrollTrack>
				<ScrollThumb />
			</ScrollTrack>
		</ResultBox>
		<OkRow>
			<ActionButton $w={72} $h={21} $primary>
				OK
			</ActionButton>
		</OkRow>
	</Dialog>
);

const ParamDialog = () => (
	<Dialog $x={804} $y={31} $w={638} $h={716}>
		<DialogHead $pad={8} $muted>
			<span>Параметры проектирования металлических трубопроводов</span>
			<X size={15} strokeWidth={1} color="#8a8a8a" />
		</DialogHead>
		<ParamBody>
			<FormRow $h={18}>
				<Label $w={46}>Имя:</Label>
				<TextField>Нефтепровод магистральный 530 мм</TextField>
			</FormRow>
			<FormRow $mt={14}>
				<Label $w={105}>Тип трубопровода:</Label>
				<Select w={248}>Нефтепровод магистральный</Select>
				<Label $w={136} $ml={7}>Диаметр трубопровода:</Label>
				<Select w={58} disabled>мм</Select>
				<Select w={59} ml={8}>530</Select>
			</FormRow>
			<FormRow $mt={12}>
				<Label $w={135}>Нормативный документ:</Label>
				<Select w={218}>СП 36.13330.2012</Select>
				<Label $w={137} $ml={6}>Рабочее давление:</Label>
				<TextField $w={58}>7</TextField>
				<Select w={59} ml={8}>МПа</Select>
			</FormRow>
			<ParamTabs>
				<ParamTab $w={78}>Трубопровод</ParamTab>
				<ParamTab $w={111}>Условия прокладки</ParamTab>
				<ParamTab $w={204} $active>Расчет категорий для трубопровода</ParamTab>
				<ParamTab $w={51}>Отводы</ParamTab>
				<ParamTab $w={94}>Полоса/траншея</ParamTab>
			</ParamTabs>
			<TabBody>
				<TabInner>
					<CategoryBar>
						<CategoryTabs>
							<ParamTab $w={78}>Категория IV</ParamTab>
							<ParamTab $w={92} $active>Категория III *</ParamTab>
							<ParamTab $w={75}>Категория II</ParamTab>
							<ParamTab $w={74}>Категория I</ParamTab>
							<ParamTab $w={73}>Категория В</ParamTab>
						</CategoryTabs>
						<ActionButton $w={125} $m="2px 0 0 11px">Сформировать отчет</ActionButton>
					</CategoryBar>
					<GroupBox>
						<SectionHead $h={24} $pt={3}>
							Материал трубопровода
							<CheckRow>
								<CheckBox>
									<Check size={11} strokeWidth={2} />
								</CheckBox>
								Категория по умолчанию
							</CheckRow>
						</SectionHead>
						<FormRow $mt={7}>
							<Label $w={99}>Класс прочности:</Label>
							<TextField $w={43}>52</TextField>
							<Label $w={106} $ml={60}>ТУ на трубопровод:</Label>
							<Select dark>ТУ 14-3-1573-96</Select>
						</FormRow>
						<FormRow $mt={4}>
							<Label $w={98}>Марка материала:</Label>
							<Select w={89} dark>17Г1С</Select>
							<Label $w={107} $ml={15}>ТУ на материал:</Label>
							<TextField />
						</FormRow>
						<FormRow $mt={14} $h={18}>
							<Label $w={151}>Описание на профиле:</Label>
							<TextField>Труба $Dx$dt - $M - $M1 - $Tut, L = $Lt м</TextField>
						</FormRow>
						<FormRow $mt={6} $h={18}>
							<Label $w={151}>Описание в спецификации:</Label>
							<TextField>Труба $Dx$dt - $M - $M1</TextField>
						</FormRow>
						<FormRow $mt={15}>
							<Label $w={241}>Норм. временное сопротивление (R1н), МПа:</Label>
							<TextField $w={43}>510</TextField>
							<Label $w={219} $ml={15}>Коэфф. надежности по материалу (К1):</Label>
							<Select w={59} dark>1.34</Select>
						</FormRow>
						<FormRow $mt={4}>
							<Label $w={241}>Норм. предел текучести (R2н), МПа:</Label>
							<TextField $w={43}>445</TextField>
							<Label $w={219} $ml={15}>Коэфф. надежности по материалу (К2):</Label>
							<Select w={59} dark>1.2</Select>
						</FormRow>
						<FormRow $mt={5}>
							<Label $w={241}>Коэфф. надежности по нагрузке (nр):</Label>
							<TextField $w={43}>1.1</TextField>
							<Label $w={219} $ml={15}>Коэфф. надежности по назначению (Кн):</Label>
							<Select w={59} dark>1.1</Select>
						</FormRow>
						<ActionButton $m="13px 0 0 1px">Применить для всех категорий</ActionButton>
						<FormRow $mt={11}>
							<Label $w={225}>Коэффициент условий работы (m):</Label>
							<Select w={59} dark>0.99</Select>
							<Label $w={120} $ml={54}>Давление испытаний:</Label>
							<Select w={59} dark>1.1</Select>
							<Label $w={50} $ml={7}>х Р раб.</Label>
						</FormRow>
						<SectionHead $h={18} $mt={11}>Данные расчета</SectionHead>
						<CalcRows>
							<FormRow $h={18} $pad={97}>
								<Label $w={331}>Заданная толщина стенки, мм:</Label>
								<TextField $w={44}>7</TextField>
							</FormRow>
							<FormRow $h={18} $pad={97}>
								<Label $w={331}>Радиус упругого изгиба, м:</Label>
								<TextField $w={44}>600</TextField>
							</FormRow>
							<FormRow $h={18} $pad={97}>
								<Label $w={331}>Расчетный положительный температурный перепад, °С:</Label>
								<TextField $w={44}>65</TextField>
							</FormRow>
							<FormRow $h={18} $pad={97}>
								<Label $w={331}>Расчетный отрицательный температурный перепад, °С:</Label>
								<TextField $w={44}>-35</TextField>
							</FormRow>
						</CalcRows>
						<ActionButton $m="15px 0 0 1px" $primary>Расчет ОКП трубопровода</ActionButton>
					</GroupBox>
				</TabInner>
			</TabBody>
			<Rule />
			<FootRow>
				<ActionButton $w={192}>Нормативные параметры по СП</ActionButton>
				<FootGap />
				<ActionButton $w={72} $m="0 3px 0 0">OK</ActionButton>
				<ActionButton $w={72}>Отмена</ActionButton>
				<ActionButton $w={72}>Применить</ActionButton>
			</FootRow>
		</ParamBody>
	</Dialog>
);

const TreeNode = ({ node }) => {
	const cols = [];
	for (let i = 0; i < node.col; i++) {
		cols.push(<Guide key={i} $line={node.lines && node.lines.includes(i)} />);
	}
	return (
		<TreeRow>
			{cols}
			<NodeCell $up={node.up} $down={node.down}>
				{node.t && (
					<Toggle>
						<ToggleBar />
						{node.t === "+" && <TogglePost />}
					</Toggle>
				)}
			</NodeCell>
			<NodeIcon>{NODE_ICONS[node.icon]}</NodeIcon>
			<NodeText $selected={node.selected}>{node.text}</NodeText>
		</TreeRow>
	);
};

const App = () => (
	<Root>
		<GlobalStyle />
		<TitleBar>
			<TopSliver />
			<LogoBlock>
				<Logo />
			</LogoBlock>
			<Qat>
				<DocSheet />
				<FolderOpen />
				<Save />
				<Save check />
				<ArrowSmall c="#6f9fd8" back />
				<QatCaret />
				<ArrowSmall c="#f2f2f2" />
				<QatCaret />
				<Printer />
				<QatCaret $c="#bbb" />
			</Qat>
			<TitleText>
				Платформа nanoCAD x64 24 - не для коммерческого использования нефтепровод магистральный_530мм.dwg*
			</TitleText>
			<HelpBlock>
				<Icon w={20} h={22}>
					<rect x="1" y="1" width="18" height="20" fill="#2a2a2a" stroke="#5a8fd8" strokeWidth="1.2" />
					<rect x="3" y="4" width="14" height="5" fill="#e8a450" />
					<path d="M4 10v9h12v-9" fill="none" stroke="#c8c8c8" />
				</Icon>
				?
				<QatCaret />
			</HelpBlock>
			<WinControls>
				<WinButton>
					<Minus size={12} strokeWidth={1} />
				</WinButton>
				<WinButton $active>
					<Icon w={12} h={14}>
						<rect x="1.5" y="3.5" width="8" height="9" fill="none" stroke="#222" strokeWidth="1.2" />
						<path d="M4 1.5h6.5v8" fill="none" stroke="#222" />
					</Icon>
				</WinButton>
				<WinButton>
					<X size={15} strokeWidth={1} />
				</WinButton>
			</WinControls>
		</TitleBar>

		<RibbonTabs>
			{RIBBON_TABS.map(([t, w, active]) => (
				<RibbonTab key={t} $w={w} $active={active}>
					{t}
				</RibbonTab>
			))}
		</RibbonTabs>
		<Ribbon>
			<RibbonPanel>
				<RibbonBody>
					<RibbonCol>
						<RibbonItem><Tools />Область инструментов GS</RibbonItem>
						<RibbonItem><ExportParams />Параметры экспорта в nanoCAD</RibbonItem>
						<RibbonItem><Split />Разобрать модель в другой чертеж</RibbonItem>
					</RibbonCol>
					<RibbonCol>
						<RibbonItem><XmlDisk />Экспорт в XML</RibbonItem>
						<RibbonItem><Decimal />Изменить десятичный разделитель</RibbonItem>
						<RibbonItem><Deploy />Развернуть по видовым экранам</RibbonItem>
					</RibbonCol>
					<RibbonCol $center>
						<RibbonItem $gap={5}><Question />О программе</RibbonItem>
					</RibbonCol>
				</RibbonBody>
				<RibbonFoot>Общая</RibbonFoot>
			</RibbonPanel>
		</Ribbon>

		<Main>
			<ToolColumn>
				<ToolHeader>
					<ToolTitle>GeoSeries: Область инструментов</ToolTitle>
					<Pin size={11} color="#fff" />
					<X size={13} color="#fff" strokeWidth={2.4} />
				</ToolHeader>
				<ToolBody>
					<ToolStack>
						<TreePane>
							{TREE.map((n) => (
								<TreeNode key={n.text} node={n} />
							))}
						</TreePane>
						<PreviewPane />
					</ToolStack>
					<SideTabs>
						<SideTab $h={118}>Трассы и Профили</SideTab>
						<SideTab $h={121}>Геология</SideTab>
						<SideTab $h={121} $active>Трубопроводы</SideTab>
					</SideTabs>
				</ToolBody>
			</ToolColumn>
			<DocColumn>
				<DocTabs>
					<DocTab>
						нефтепровод магистральный_530мм.dwg*
						<X size={12} color="#ddd" />
					</DocTab>
					<DocSpacer />
					<DocCaret />
				</DocTabs>
				<Viewport>
					<CadDrawing />
					<ViewPills>
						<ViewPill $w={86} $fs={11} $start>
							<span>+</span>
							<span>Сверху</span>
						</ViewPill>
						<ViewPill $w={72} $fs={11}>2D-каркас</ViewPill>
						<ViewPill $w={158} $fs={12.2}>--- нет связанных видов ---</ViewPill>
					</ViewPills>
					<CalcDialog />
					<ParamDialog />
				</Viewport>
				<LayoutBar>
					<LayoutMenu>
						<Icon w={16} h={15}>
							<rect x=".5" y=".5" width="15" height="14" fill="none" stroke="#ccc" />
							<rect x="1" y="5" width="14" height="4" fill="#6f9fd8" />
							<path d="M1 5h14M1 10h14" stroke="#ccc" />
						</Icon>
					</LayoutMenu>
					<LayoutTab $w={57} $active>Модель</LayoutTab>
					<LayoutTab $w={55}>Layout1</LayoutTab>
					<LayoutTab $w={57}>Layout2</LayoutTab>
				</LayoutBar>
			</DocColumn>
		</Main>

		<CommandArea>
			<CommandStrip>
				<X size={11} strokeWidth={2.6} />
				<Pin size={11} />
				<StripText>Команд</StripText>
			</CommandStrip>
			<CommandMain>
				<CommandLog>
					<div>*Отмена*</div>
					<div>*Отмена*</div>
					<div>*Отмена*</div>
					<div>*Отмена*</div>
				</CommandLog>
				<CommandInput>Команда :</CommandInput>
			</CommandMain>
		</CommandArea>

		<StatusBar>
			<StatusText $w={177} $align="left" $pad={3} $ls={0.1}>204161.5338,769957.8985,0.0000</StatusText>
			<StatusRule $m={0} />
			<StatusText $w={42}>ШАГ</StatusText>
			<StatusToggle $w={50}>СЕТКА</StatusToggle>
			<StatusText $w={79}>оПРИВЯЗКА</StatusText>
			<StatusToggle $w={96}>3D оПРИВЯЗКА</StatusToggle>
			<StatusToggle $w={85}>ОТС-ОБЪЕКТ</StatusToggle>
			<StatusToggle $w={81}>ОТС-ПОЛЯР</StatusToggle>
			<StatusText $w={48}>ОРТО</StatusText>
			<StatusToggle $w={82}>ДИН-ВВОД</StatusToggle>
			<StatusText $w={30}>ИЗО</StatusText>
			<StatusRule $m={1} />
			<StatusText $w={42}>ВЕС</StatusText>
			<StatusToggle $w={85}>ШТРИХОВКА</StatusToggle>
			<StatusRule $m={2} />
			<StatusText $w={411} $align="right">МОДЕЛЬ</StatusText>
			<StatusIcon $w={22}>
				<Lock size={13} />
			</StatusIcon>
			<StatusIcon $w={22}>
				<Icon w={14} h={18}>
					<rect x="1" y="1" width="11" height="12" fill="#ddd" />
					<path d="M3 13h8l-4 4z" fill="#fff" />
				</Icon>
			</StatusIcon>
			<StatusIcon $w={91} />
			<StatusIcon $w={22}>
				<Icon w={18} h={18}>
					<rect x="3" y="5" width="12" height="12" fill="none" stroke="#b0b0b0" />
					<circle cx="6" cy="6" r="4" fill="#efe2a8" />
					<path d="M10 8l5 6-3-.5-1 2.5z" fill="#fff" />
				</Icon>
			</StatusIcon>
			<StatusIcon $w={23}>
				<Icon w={14} h={20}>
					<ellipse cx="7" cy="7" rx="6" ry="7" fill="#cfcfcf" />
					<rect x="4.5" y="13" width="5" height="5" fill="#999" />
				</Icon>
			</StatusIcon>
			<StatusIcon $w={29} $on>
				<Icon w={18} h={18}>
					<circle cx="9" cy="9" r="7.5" fill="none" stroke="#e02222" strokeWidth="1.6" />
					<path d="M6 14l6-10" stroke="#e02222" strokeWidth="1.4" />
					<path d="M8 3l3 9-2.5-1-1 2.5z" fill="#111" />
				</Icon>
			</StatusIcon>
			<StatusIcon $w={29} $on>
				<Icon w={18} h={18}>
					<path d="M4 2l6 8-3 0 1.5 5-2 .5-1.5-5L3 12z" fill="#fff" />
					<rect x="10" y="10" width="7" height="7" fill="#333" stroke="#eee" />
				</Icon>
			</StatusIcon>
			<StatusIcon $w={29} $on>
				<Icon w={18} h={18}>
					<path d="M4 2v13h13" fill="none" stroke="#ddd" strokeWidth="1.2" />
					<path d="M10 2l-3 7h3l-2 5" fill="none" stroke="#fff" strokeWidth="1.2" />
				</Icon>
			</StatusIcon>
			<StatusText $w={89}>m1:1</StatusText>
			<StatusRule $m={0} />
			<StatusIcon $w={27}>
				<Hand size={17} fill="#fff" color="#222" strokeWidth={1} />
			</StatusIcon>
			<StatusRule $m={0} />
			<StatusIcon $w={38}>
				<Search size={18} color="#bfe0f5" strokeWidth={2} />
			</StatusIcon>
			<StatusIcon $w={16} $on>
				<Search size={13} color="#14406e" strokeWidth={2.6} />
			</StatusIcon>
			<StatusIcon $w={31}>
				<Icon w={18} h={18}>
					<rect x="2" y="1" width="13" height="15" fill="none" stroke="#6f9fd8" strokeWidth="1.3" />
					<circle cx="11" cy="11" r="3.5" fill="none" stroke="#ccc" />
					<path d="M13.5 13.5l3 3" stroke="#ccc" strokeWidth="1.3" />
				</Icon>
			</StatusIcon>
			<StatusRule $m={0} />
			<StatusIcon $w={29}>
				<Icon w={18} h={20}>
					<circle cx="9" cy="10" r="6.5" fill="none" stroke="#b8b8b8" />
					<path d="M9 1v18" stroke="#b8b8b8" />
				</Icon>
			</StatusIcon>
			<StatusRule $m={0} />
			<StatusIcon $w={29}>
				<Icon w={16} h={18}>
					<ellipse cx="8" cy="9" rx="5" ry="7" fill="none" stroke="#a6d860" strokeWidth="2.4" />
				</Icon>
			</StatusIcon>
			<StatusIcon $w={22}>
				<Icon w={18} h={18}>
					<rect x="1" y="2" width="13" height="13" fill="none" stroke="#bbb" />
					<rect x="9" y="10" width="8" height="7" fill="#e8e8e8" />
				</Icon>
			</StatusIcon>
			<StatusIcon $w={23}>
				<Icon w={18} h={20}>
					<path d="M1 10V2h8M4 8l6-6" fill="none" stroke="#eee" strokeWidth="1.2" />
					<rect x="8" y="8" width="9" height="11" fill="#ee5555" />
					<rect x="12" y="10" width="1.6" height="5" fill="#fff" />
				</Icon>
			</StatusIcon>
			<StatusRule $m={0} />
			<StatusIcon $w={27}>
				<Icon w={20} h={20}>
					<path d="M1 6V1h5M14 1h5v5M19 14v5h-5M6 19H1v-5" fill="none" stroke="#ddd" strokeWidth="1.2" />
					<rect x="4" y="4" width="12" height="12" fill="#1f9ee0" />
				</Icon>
			</StatusIcon>
		</StatusBar>
		<BottomStrip />
	</Root>
);

export default App;
